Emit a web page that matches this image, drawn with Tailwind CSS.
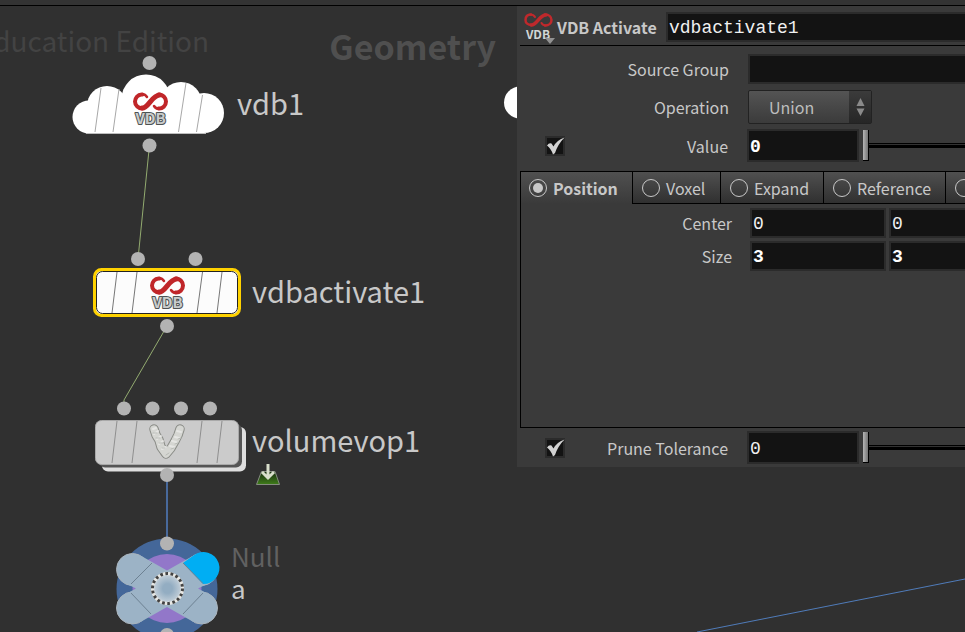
<!DOCTYPE html>
<html lang="en">
<head>
<meta charset="utf-8">
<meta name="viewport" content="width=device-width, initial-scale=1">
<title>Geometry network</title>
<script src="https://cdn.jsdelivr.net/npm/@tailwindcss/browser@4"></script>
</head>
<body class="flex h-screen flex-col overflow-hidden bg-[#303030] font-['Noto_Sans_CJK_SC',sans-serif] text-[#c8c8c8]">
<div class="h-[6px] shrink-0 border-b border-black bg-[#333333]"></div>
<main class="relative min-h-0 flex-1 overflow-hidden">

  <!-- network canvas -->
  <section aria-label="Network" class="absolute inset-0 -top-[6px]">
    <div class="absolute top-[20px] left-0 flex w-[209px] justify-end overflow-hidden text-[28px] leading-10 whitespace-nowrap text-[#434343]">Education Edition</div>
    <h1 class="absolute top-[22px] right-[469px] text-[34px] leading-[48px] font-bold text-[#4f4f4f]">Geometry</h1>

    <svg class="absolute inset-0 h-full w-full" aria-hidden="true">
      <defs>
        <g id="loop" fill="none" stroke="#c02629" stroke-linecap="round">
          <path stroke-width="2.500" d="M-3.500-4.500C-5-7-8-7.500-10-7"/>
          <path stroke-width="4" d="M-8-7C-13-7.500-15.500-3-15.500 0C-15.500 4-12 7-8 7"/>
          <path stroke-width="5" d="M-8.500 6.500C-2 7 1-6 9-6.500"/>
          <path stroke-width="4" d="M8-7C13-7 15.500-3 15.500 0C15.500 4 12 7.500 8 7"/>
          <path stroke-width="2.500" d="M3.500 4.500C5 7 8 7.500 10 7"/>
        </g>
        <g id="vdb">
          <use href="#loop"/>
          <text x="0" y="22" text-anchor="middle" font-size="15" font-weight="700" fill="#c9cccc" stroke="#4d5252" stroke-width="2" paint-order="stroke" stroke-linejoin="round">VDB</text>
        </g>
        <radialGradient id="hub"><stop offset=".3" stop-color="#93adc2"/><stop offset=".75" stop-color="#b9c8d4"/><stop offset="1" stop-color="#eeeeea"/></radialGradient>
        <linearGradient id="green" x2="0" y2="1"><stop stop-color="#182c10"/><stop offset="1" stop-color="#3f7d1a"/></linearGradient>
      </defs>

      <!-- wires -->
      <path d="M149.500 145L138 259M167 326L124 400V408" stroke="#93ab70" fill="none"/>
      <path d="M167 475V543" stroke="#48699b" stroke-width="2"/>
      <path d="M697 632L965 579" stroke="#507cba"/>

      <!-- vdb1 -->
      <g fill="#fff">
        <circle cx="89" cy="117" r="16.500"/><circle cx="107" cy="106" r="20"/><circle cx="146" cy="99" r="24.500"/><circle cx="181" cy="103" r="21"/><circle cx="204" cy="113" r="20"/>
        <rect x="89" y="104" width="115" height="29"/>
      </g>
      <path d="M86 133.500H206" stroke="#bdbdbd"/>
      <path d="M101 88L95 132M119 89L113 132M186 83L178.500 132M202.500 95L196.500 132" stroke="#a8a8a8"/>
      <use href="#vdb" x="150.500" y="101.500"/>

      <!-- vdbactivate1 -->
      <rect x="94.500" y="269.500" width="145" height="46" rx="7" fill="#fcfcfc" stroke="#ffd200" stroke-width="3"/>
      <rect x="96.500" y="271.500" width="141" height="42" rx="6" fill="none" stroke="#222"/>
      <path d="M117 272L112 313M137 272L132 313M202.500 272L197 313M222 272L217 313" stroke="#777"/>
      <use href="#vdb" x="167.500" y="285.500"/>

      <!-- volumevop1 -->
      <rect x="102" y="427" width="144" height="44.500" rx="6" fill="#dedede"/>
      <rect x="99" y="424" width="143" height="43.500" rx="6" fill="#555"/>
      <rect x="95.500" y="420.500" width="143" height="44" rx="6" fill="#cbcbcb" stroke="#a9a9a9"/>
      <path d="M117 421L112 463M137 421L132 463M202 421L197 463M222 421L217 463" stroke="#8f8f8f"/>
      <g fill="none" stroke-linejoin="round" stroke-linecap="round">
        <path d="M154 429L156 435L159 440L161 447L166 454L171 448L175 441L178 435L180 429" stroke="#898b86" stroke-width="9.500"/>
        <path d="M154 429L156 435L159 440L161 447L166 454L171 448L175 441L178 435L180 429" stroke="#d5d6d2" stroke-width="7.500"/>
        <path d="M153 429l3-1M154 434l4-3M157 439l4-3M159 444l4-3M162 449l4-2M170 446l4 1M172 441l4 1M175 437l4 1M177 431l4 1" stroke="#e6e6e4" stroke-width="2"/>
        <path d="M153 433l4 0M156 438l4 0M159 443l4 0M162 448l3 0M166 455l3-2M171 449l3-1M175 444l3-1M178 439l3-1" stroke="#b9bcb7"/>
      </g>
      <path d="M261.500 471.500H275L279.500 484.500H256.500Z" fill="url(#green)" stroke="#858c80"/>
      <path d="M268 464V477M262 472L268 478L274 472" fill="none" stroke="#d8decb" stroke-width="3"/>

      <!-- null node -->
      <circle cx="167" cy="589" r="50.500" fill="#446799"/>
      <circle cx="167" cy="588.500" r="34.500" fill="#9277c9"/>
      <g fill="#9cb3c6" stroke="#aab4bc">
        <circle cx="132.500" cy="569.500" r="16"/><circle cx="201.500" cy="569.500" r="16"/><circle cx="132.500" cy="608" r="16"/><circle cx="201.500" cy="608" r="16"/>
      </g>
      <path d="M140.500 555.500L167 570.500L193.500 555.500L212 581.500L198 588.500L212 596L193.500 622L167 607L140.500 622L122 596L136 588.500L122 581.500Z" fill="#9cb3c6"/>
      <path d="M183 563L193.500 555.500A16 16 0 1 1 203 584Z" fill="#00aef3"/>
      <path d="M152 563L131 584M131 593L151 614M203 593L183 614M183 563L203 583.500" stroke="#6d8192"/>
      <circle cx="167.500" cy="588.500" r="16" fill="url(#hub)"/>
      <circle cx="167.500" cy="588.500" r="15" fill="none" stroke="#e8e8e4" stroke-width="3"/>
      <circle cx="167.500" cy="588.500" r="15" fill="none" stroke="#424242" stroke-width="3" stroke-dasharray="2.700 2.536"/>

      <!-- connectors -->
      <g fill="#b3b3b3">
        <circle cx="149.500" cy="63" r="7"/><circle cx="149.500" cy="145.500" r="7"/>
        <circle cx="138" cy="259" r="7"/><circle cx="195.500" cy="259" r="7"/><circle cx="167" cy="326" r="7"/>
        <circle cx="124" cy="408.500" r="7"/><circle cx="152.500" cy="408.500" r="7"/><circle cx="181" cy="408.500" r="7"/><circle cx="210" cy="408.500" r="7"/>
        <circle cx="167" cy="475" r="7"/><circle cx="167" cy="543.500" r="7"/><circle cx="167" cy="635" r="7"/>
      </g>
      <circle cx="520" cy="102.500" r="16" fill="#fff"/>
    </svg>

    <span class="absolute top-[82px] left-[237px] text-[29px] leading-10">vdb1</span>
    <span class="absolute top-[270px] left-[252px] text-[29px] leading-10">vdbactivate1</span>
    <span class="absolute top-[419px] left-[252px] text-[29px] leading-10">volumevop1</span>
    <div class="absolute top-[540px] left-[231px] flex flex-col text-[26px] leading-8">
      <span class="text-[#616161]">Null</span>
      <span>a</span>
    </div>
  </section>

  <!-- parameter panel -->
  <form class="absolute top-0 right-0 left-[517px] flex flex-col overflow-hidden bg-[#3a3a3a] pb-[3px] pl-[3px] text-[16px]">
    <header class="flex h-10 items-center border-b border-black pt-[2px]">
      <svg class="h-9 w-9 shrink-0" viewBox="0 0 36 36" aria-hidden="true">
        <g fill="none" stroke="#bf292c" stroke-linecap="round">
          <path stroke-width="2" d="M15 8C14 6 12 5.500 10 5.500"/>
          <path stroke-width="2.500" d="M11 5.500C7 5.500 5.500 8 5.500 11C5.500 14 8 16 11.500 16"/>
          <path stroke-width="3.500" d="M11 16C17 16.500 19 6 26 6"/>
          <path stroke-width="2.500" d="M25 5.500C29 5.500 31.500 8 31.500 11C31.500 14 29 16.500 25 16.500"/>
          <path stroke-width="2" d="M21.500 14C22.500 16 24 16.500 26 16.500"/>
        </g>
        <text x="18" y="30" text-anchor="middle" font-size="12" font-weight="700" fill="#d2d6d6">VDB</text>
        <path d="M25 29H35L30 35Z" fill="#929292"/>
      </svg>
      <label for="name" class="w-[110px] shrink-0 pl-[1px] font-bold whitespace-nowrap">VDB Activate</label>
      <input id="name" value="vdbactivate1" class="h-[30px] min-w-0 flex-1 border-2 border-r-0 border-[#2b2b2b] bg-[#131313] pt-[2px] pl-[1px] font-['Liberation_Mono',monospace] text-[18px] text-[#f0f0f0] outline-none">
    </header>

    <div class="flex flex-col gap-[5px] pt-2">
      <div class="flex h-[30px] items-center">
        <label for="group" class="w-[209px] shrink-0 text-right">Source Group</label>
        <input id="group" class="ml-[19px] h-[30px] min-w-0 flex-1 border-2 border-r-0 border-[#2b2b2b] bg-[#131313] outline-none">
      </div>
      <div class="flex h-[35px] items-center">
        <label for="op" class="w-[209px] shrink-0 text-right">Operation</label>
        <div class="relative ml-[19px] h-[34px] w-[124px]">
          <select id="op" class="h-full w-full appearance-none rounded-[2px] border border-[#222] bg-linear-to-b from-[#545454] to-[#3b3b3b] pl-5 text-[#bdbdbd] outline-none">
            <option>Union</option>
          </select>
          <svg class="pointer-events-none absolute top-[1px] right-[1px] h-8 w-[22px] bg-linear-to-b from-[#3b3b3b] to-[#262626]" viewBox="0 0 22 32" fill="#8a8a8a" aria-hidden="true"><path d="M7.500 15L11.500 7L15.500 15ZM7.500 17.500H15.500L11.500 25Z"/></svg>
        </div>
      </div>
      <div class="flex h-[33px] items-center">
        <div class="relative ml-[25px] h-5 w-5">
          <input type="checkbox" checked aria-label="Enable value" class="block h-5 w-5 appearance-none border-2 border-[#2b2b2b] bg-[#131313]">
          <svg class="pointer-events-none absolute inset-0 h-5 w-5" viewBox="0 0 20 20" fill="#d2d2d2" aria-hidden="true"><path d="M2 9.500Q4 6.500 6.500 7.500L8.500 10.500Q12 4 19.500 1.500Q13 8 10 17L8 18.500Q6 12.500 2 9.500Z"/></svg>
        </div>
        <label for="value" class="w-[163px] shrink-0 text-right">Value</label>
        <input id="value" value="0" class="ml-[19px] h-[33px] w-28 border-2 border-[#2b2b2b] bg-[#131313] pt-[2px] pl-[1px] font-['Liberation_Mono',monospace] text-[18px] font-bold text-white outline-none">
        <input type="range" value="0" aria-label="Value slider" class="ml-1 h-8 min-w-0 flex-1 appearance-none bg-[linear-gradient(#000_0_1px,#333_1px_2px,#000_2px_5px)] bg-size-[100%_5px] bg-center bg-no-repeat outline-none [&::-webkit-slider-thumb]:h-[31px] [&::-webkit-slider-thumb]:w-[6px] [&::-webkit-slider-thumb]:appearance-none [&::-webkit-slider-thumb]:border-r [&::-webkit-slider-thumb]:border-b [&::-webkit-slider-thumb]:border-black [&::-webkit-slider-thumb]:bg-linear-to-r [&::-webkit-slider-thumb]:from-[#b5b5b5] [&::-webkit-slider-thumb]:to-[#747474]">
      </div>
    </div>

    <section class="mt-[9px] min-h-[257px] border border-r-0 border-black">
      <div class="flex h-8 overflow-hidden">
        <label class="flex w-[111px] shrink-0 items-center gap-[6px] bg-linear-to-b from-[#505050] to-[#3a3a3a] pl-2 font-bold">
          <input type="radio" name="tab" checked class="h-[18px] w-[18px] shrink-0 appearance-none rounded-full border border-[#c8c8c8] bg-[#c8c8c8] bg-clip-content p-[3px]">Position</label>
        <label class="flex w-[88px] shrink-0 items-center gap-[6px] border-b border-l border-black bg-linear-to-b from-[#505050] to-[#303030] pl-[9px]">
          <input type="radio" name="tab" class="h-[18px] w-[18px] shrink-0 appearance-none rounded-full border border-[#c8c8c8]">Voxel</label>
        <label class="flex w-[103px] shrink-0 items-center gap-[6px] border-b border-l border-black bg-linear-to-b from-[#505050] to-[#303030] pl-[9px]">
          <input type="radio" name="tab" class="h-[18px] w-[18px] shrink-0 appearance-none rounded-full border border-[#c8c8c8]">Expand</label>
        <label class="flex w-[122px] shrink-0 items-center gap-[6px] border-b border-l border-black bg-linear-to-b from-[#505050] to-[#303030] pl-[9px]">
          <input type="radio" name="tab" class="h-[18px] w-[18px] shrink-0 appearance-none rounded-full border border-[#c8c8c8]">Reference</label>
        <div class="flex flex-1 items-center border-b border-l border-black bg-linear-to-b from-[#505050] to-[#303030] pl-[9px]">
          <input type="radio" name="tab" aria-label="More" class="h-[18px] w-[18px] shrink-0 appearance-none rounded-full border border-[#c8c8c8]"></div>
      </div>
      <div class="flex flex-col gap-[3px] pt-1">
        <div class="flex h-[30px] items-center gap-[3px]">
          <label for="cx" class="mr-[15px] w-[211px] shrink-0 text-right">Center</label>
          <input id="cx" value="0" class="h-[30px] w-[136px] shrink-0 border-2 border-[#2b2b2b] bg-[#131313] pt-[2px] pl-[1px] font-['Liberation_Mono',monospace] text-[18px] text-[#f0f0f0] outline-none">
          <input aria-label="Center Y" value="0" class="h-[30px] min-w-0 flex-1 border-2 border-r-0 border-[#2b2b2b] bg-[#131313] pt-[2px] pl-[1px] font-['Liberation_Mono',monospace] text-[18px] text-[#f0f0f0] outline-none">
        </div>
        <div class="flex h-[30px] items-center gap-[3px]">
          <label for="sx" class="mr-[15px] w-[211px] shrink-0 text-right">Size</label>
          <input id="sx" value="3" class="h-[30px] w-[136px] shrink-0 border-2 border-[#2b2b2b] bg-[#131313] pt-[2px] pl-[1px] font-['Liberation_Mono',monospace] text-[18px] font-bold text-white outline-none">
          <input aria-label="Size Y" value="3" class="h-[30px] min-w-0 flex-1 border-2 border-r-0 border-[#2b2b2b] bg-[#131313] pt-[2px] pl-[1px] font-['Liberation_Mono',monospace] text-[18px] font-bold text-white outline-none">
        </div>
      </div>
    </section>

    <div class="mt-[3px] flex h-[33px] items-center">
      <div class="relative ml-[25px] h-5 w-5">
        <input type="checkbox" checked aria-label="Enable prune tolerance" class="block h-5 w-5 appearance-none border-2 border-[#2b2b2b] bg-[#131313]">
        <svg class="pointer-events-none absolute inset-0 h-5 w-5" viewBox="0 0 20 20" fill="#d2d2d2" aria-hidden="true"><path d="M2 9.500Q4 6.500 6.500 7.500L8.500 10.500Q12 4 19.500 1.500Q13 8 10 17L8 18.500Q6 12.500 2 9.500Z"/></svg>
      </div>
      <label for="prune" class="w-[163px] shrink-0 text-right">Prune Tolerance</label>
      <input id="prune" value="0" class="ml-[19px] h-[33px] w-28 border-2 border-[#2b2b2b] bg-[#131313] pt-[2px] pl-[1px] font-['Liberation_Mono',monospace] text-[18px] text-[#f0f0f0] outline-none">
      <input type="range" value="0" aria-label="Prune tolerance slider" class="ml-1 h-8 min-w-0 flex-1 appearance-none bg-[linear-gradient(#000_0_1px,#333_1px_2px,#000_2px_5px)] bg-size-[100%_5px] bg-center bg-no-repeat outline-none [&::-webkit-slider-thumb]:h-[31px] [&::-webkit-slider-thumb]:w-[6px] [&::-webkit-slider-thumb]:appearance-none [&::-webkit-slider-thumb]:border-r [&::-webkit-slider-thumb]:border-b [&::-webkit-slider-thumb]:border-black [&::-webkit-slider-thumb]:bg-linear-to-r [&::-webkit-slider-thumb]:from-[#b5b5b5] [&::-webkit-slider-thumb]:to-[#747474]">
    </div>
  </form>
</main>
</body>
</html>
